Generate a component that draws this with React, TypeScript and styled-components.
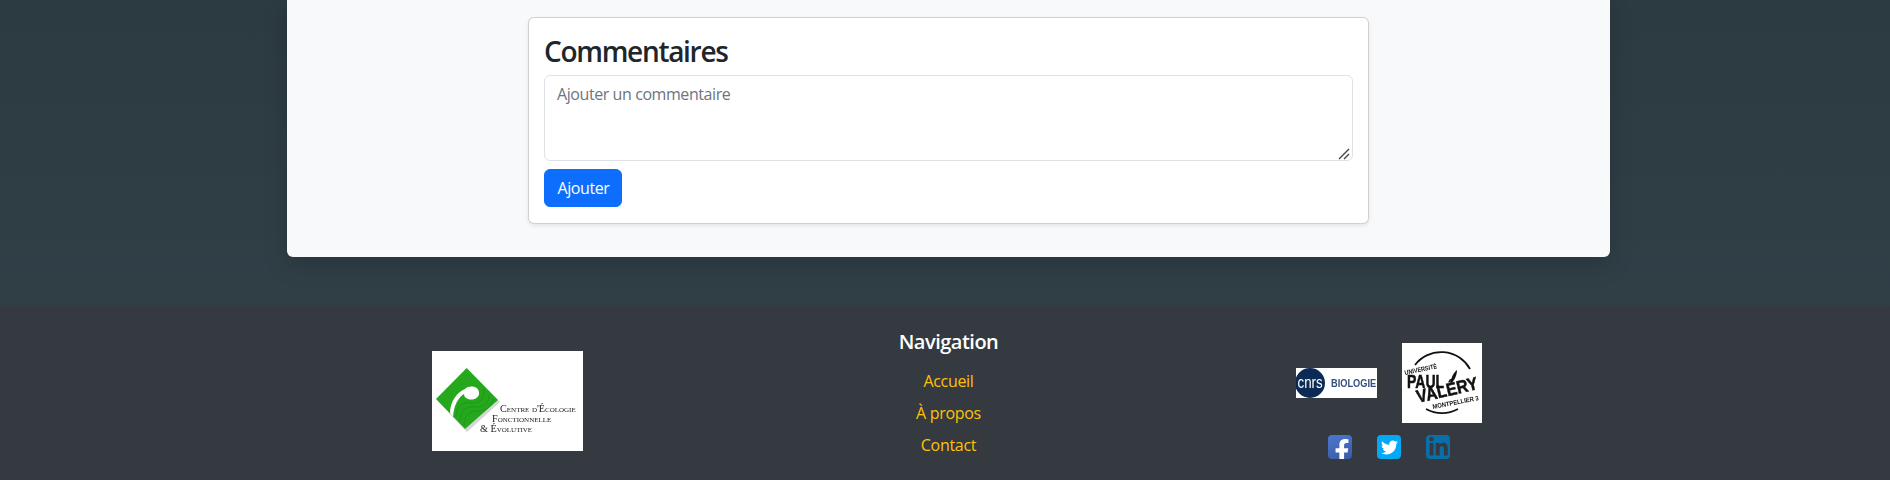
import React from "react";
import styled, { createGlobalStyle } from "styled-components";
import { FaFacebookF, FaTwitter, FaLinkedinIn } from "react-icons/fa";

const Global = createGlobalStyle`
  html, body { margin: 0; padding: 0; height: 480px; overflow: hidden; }
  body { font-family: "Open Sans", "Noto Sans", "Liberation Sans", sans-serif; font-size: 16px; color: #212529; }
  * { box-sizing: border-box; }
`;

const Page = styled.div`
  height: 480px;
  display: flex;
  flex-direction: column;
  background: linear-gradient(180deg, #2c3a41 0%, #33424a 100%);
`;

const Panel = styled.main`
  width: 1323px;
  height: 257px;
  margin-left: 287px;
  padding-top: 17px;
  background: #f8f9fa;
  border-radius: 0 0 6px 6px;
  box-shadow: 0 8px 24px rgba(0, 0, 0, 0.15);
`;

const Card = styled.section`
  width: 841px;
  height: 207px;
  margin: 0 auto;
  padding: 15px;
  display: flex;
  flex-direction: column;
  align-items: flex-start;
  background: #fff;
  border: 1px solid rgba(0, 0, 0, 0.18);
  border-radius: 6px;
  box-shadow: 0 2px 4px rgba(0, 0, 0, 0.08);
`;

const Title = styled.h3`
  margin: 0 0 6px;
  font-size: 28px;
  font-weight: 600;
  line-height: 36px;
  letter-spacing: -1.3px;
  color: #212529;
`;

const CommentField = styled.div`
  position: relative;
  width: 809px;
  height: 86px;
`;

const CommentBox = styled.textarea`
  display: block;
  width: 100%;
  height: 100%;
  padding: 6px 12px;
  font: inherit;
  font-size: 16px;
  line-height: 24px;
  letter-spacing: -0.42px;
  color: #212529;
  background: #fff;
  border: 1px solid #dee2e6;
  border-radius: 6px;
  resize: none;
  &::placeholder { color: #6c757d; opacity: 1; }
`;

const ResizeGrip = styled.svg`
  position: absolute;
  right: 2px;
  bottom: 1px;
  display: block;
`;

const SubmitButton = styled.button`
  margin-top: 8px;
  width: 78px;
  height: 38px;
  padding: 0 0 0 1px;
  font: inherit;
  font-size: 16px;
  letter-spacing: -0.42px;
  color: #fff;
  background: #0d6efd;
  border: 1px solid #0d6efd;
  border-radius: 6px;
`;

const Footer = styled.footer`
  margin-top: 48px;
  flex: 1;
  background: #343a40;
  color: #fff;
`;

const FooterGrid = styled.div`
  width: 1322px;
  margin-left: 287px;
  display: grid;
  grid-template-columns: 441px 441px 440px;
`;

const LogoColumn = styled.div`
  display: flex;
  justify-content: center;
  padding-top: 46px;
`;

const NavColumn = styled.nav`
  display: flex;
  flex-direction: column;
  align-items: center;
  padding-top: 24px;
`;

const NavTitle = styled.h5`
  margin: 0 0 10px;
  font-size: 20px;
  font-weight: 600;
  line-height: 26px;
  letter-spacing: -0.5px;
  color: #fff;
`;

const NavLink = styled.a`
  height: 32px;
  font-size: 16px;
  line-height: 32px;
  letter-spacing: -0.3px;
  color: #ffc107;
  text-decoration: none;
`;

const PartnerColumn = styled.div`
  display: flex;
  flex-direction: column;
  align-items: center;
  padding-top: 38px;
`;

const PartnerRow = styled.div`
  display: flex;
  align-items: center;
  gap: 25px;
`;

const SocialRow = styled.div`
  display: flex;
  gap: 25px;
  margin-top: 12px;
`;

const SocialIcon = styled.a<{ $bg: string; $color: string; $size: number; $align: string }>`
  width: 24px;
  height: 24px;
  display: flex;
  align-items: ${(p) => p.$align};
  justify-content: center;
  overflow: hidden;
  border-radius: 4px;
  background: ${(p) => p.$bg};
  color: ${(p) => p.$color};
  font-size: ${(p) => p.$size}px;
`;

const FacebookGlyph = styled(FaFacebookF)`
  margin: 0 0 -4px 4px;
`;

const LogoSvg = styled.svg`
  display: block;
  flex: none;
  filter: blur(0.35px);
`;

const CefeLogo = () => (
  <LogoSvg width="151" height="100" viewBox="0 0 151 100">
    <rect width="151" height="100" fill="#fff" />
    <path d="M36 20 L68 51 L35 81 L6 50 Z" fill="#bbb" opacity="0.6" />
    <path d="M34.7 17 L66 49 L33 78 L4 48 Z" fill="#25a81c" />
    <g fill="none" stroke="#1c8f16" strokeWidth="0.8" opacity="0.8">
      <path d="M24 66 C24 54 32 50 40 52 C48 53 53 47 52 38" />
      <path d="M28 70 C28 59 35 55 42 56 C51 57 58 52 57 43" />
      <path d="M32 74 C32 64 38 60 45 60 C53 60 60 56 61 48" />
    </g>
    <path d="M18 62 C18 51 25 41 33 38 C37 34 46 35 47 41 C48 47 41 50 36 48 C33 47 32 45 32 43 C27 46 22 53 21 66 Z" fill="#fff" />
    <g fontFamily="'Liberation Serif', serif" fill="#222" fontSize="10.2" style={{ fontVariant: "small-caps" }}>
      <text x="68" y="61">Centre d'Écologie</text>
      <text x="60" y="71">Fonctionnelle</text>
      <text x="48" y="81">&amp; Évolutive</text>
    </g>
  </LogoSvg>
);

const CnrsLogo = () => (
  <LogoSvg width="81" height="30" viewBox="0 0 81 30">
    <rect width="81" height="30" fill="#fff" />
    <circle cx="14" cy="15" r="15" fill="#0b2a55" />
    <text transform="translate(1.5 20) scale(0.95 1.15)" fontFamily="'Liberation Sans', sans-serif" fontSize="14" fill="#fff">cnrs</text>
    <text transform="translate(35 19) scale(0.88 1)" fontFamily="'Liberation Sans', sans-serif" fontSize="10.5" fontWeight="700" fill="#34507f">BIOLOGIE</text>
  </LogoSvg>
);

const UpvLogo = () => (
  <LogoSvg width="80" height="80" viewBox="0 0 80 80">
    <rect width="80" height="80" fill="#fff" />
    <g fill="none" stroke="#111" strokeWidth="1.8">
      <path d="M13 22 A33 33 0 0 1 68 26" />
      <path d="M24 66 A33 33 0 0 0 56 66" />
    </g>
    <path d="M48 42 C49 35 51 30 55 27 C55 33 52 38 48 42 Z" fill="#111" />
    <g fontFamily="'Liberation Sans', sans-serif" fill="#111" fontWeight="700">
      <text transform="translate(3 32) rotate(-12) scale(0.85 1)" fontSize="6.5">UNIVERSITÉ</text>
      <text transform="translate(5 45) scale(0.78 1)" fontSize="18" stroke="#111" strokeWidth="0.5">PAUL</text>
      <text transform="translate(16 60) rotate(-13) scale(0.88 1)" fontSize="18" stroke="#111" strokeWidth="0.5">VALÉRY</text>
      <text transform="translate(31 66) rotate(-11) scale(0.9 1)" fontSize="6.5">MONTPELLIER 3</text>
    </g>
  </LogoSvg>
);

export default function App() {
  return (
    <Page>
      <Global />
      <Panel>
        <Card>
          <Title>Commentaires</Title>
          <CommentField>
            <CommentBox placeholder="Ajouter un commentaire" />
            <ResizeGrip width="13" height="12" viewBox="0 0 13 12">
              <path d="M1 11 L11 1 M6 11 L11 6" stroke="#444" strokeWidth="1.4" fill="none" />
            </ResizeGrip>
          </CommentField>
          <SubmitButton type="button">Ajouter</SubmitButton>
        </Card>
      </Panel>
      <Footer>
        <FooterGrid>
          <LogoColumn>
            <CefeLogo />
          </LogoColumn>
          <NavColumn>
            <NavTitle>Navigation</NavTitle>
            <NavLink href="#">Accueil</NavLink>
            <NavLink href="#">À propos</NavLink>
            <NavLink href="#">Contact</NavLink>
          </NavColumn>
          <PartnerColumn>
            <PartnerRow>
              <CnrsLogo />
              <UpvLogo />
            </PartnerRow>
            <SocialRow>
              <SocialIcon href="#" $bg="linear-gradient(160deg, #4a78d0, #3b5aa5)" $color="#fff" $size={24} $align="flex-end">
                <FacebookGlyph />
              </SocialIcon>
              <SocialIcon href="#" $bg="#03a9f4" $color="#fff" $size={17} $align="center">
                <FaTwitter />
              </SocialIcon>
              <SocialIcon href="#" $bg="#0a6fa8" $color="#343a40" $size={21} $align="center">
                <FaLinkedinIn />
              </SocialIcon>
            </SocialRow>
          </PartnerColumn>
        </FooterGrid>
      </Footer>
    </Page>
  );
}
